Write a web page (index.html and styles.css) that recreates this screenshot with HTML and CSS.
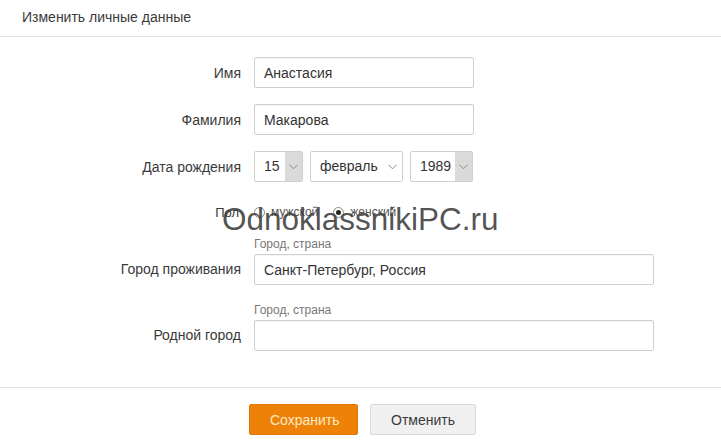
FILE: index.html
```html
<!DOCTYPE html>
<html>
	<head>
		<meta charset="utf-8" />
		<meta name="viewport" content="width=device-width, initial-scale=1.0" />
		<title>Изменить личные данные</title>
		<link rel="stylesheet" href="styles.css">
	</head>
	<body class="main">
        <header class="panel-header">Изменить личные данные</header>
        <form class="form">
            <div class="row">
                <label class="label">Имя</label>
                <input class="field field-short" type="text" value="Анастасия">
            </div>
            <div class="row">
                <label class="label">Фамилия</label>
                <input class="field field-short" type="text" value="Макарова">
            </div>
            <div class="row">
                <label class="label">Дата рождения</label>
                <div class="date">
                    <div class="select select-day">
                        <span class="select-value">15</span>
                        <span class="select-arrow shaded">
                            <svg width="9" height="6" viewBox="0 0 9 6"><path d="M0.5 0.8 L4.5 4.8 L8.5 0.8" fill="none" stroke="#8a8a8a" stroke-width="1"/></svg>
                        </span>
                    </div>
                    <div class="select select-month">
                        <span class="select-value">февраль</span>
                        <span class="select-arrow">
                            <svg width="9" height="6" viewBox="0 0 9 6"><path d="M0.5 0.8 L4.5 4.8 L8.5 0.8" fill="none" stroke="#8a8a8a" stroke-width="1"/></svg>
                        </span>
                    </div>
                    <div class="select select-year">
                        <span class="select-value">1989</span>
                        <span class="select-arrow shaded">
                            <svg width="9" height="6" viewBox="0 0 9 6"><path d="M0.5 0.8 L4.5 4.8 L8.5 0.8" fill="none" stroke="#8a8a8a" stroke-width="1"/></svg>
                        </span>
                    </div>
                </div>
            </div>
            <div class="row row-gender">
                <label class="label label-small">Пол</label>
                <div class="radios">
                    <span class="radio"><span class="radio-dot"></span>мужской</span>
                    <span class="radio"><span class="radio-dot checked"></span>женский</span>
                </div>
            </div>
            <div class="row row-city">
                <label class="label label-city">Город проживания</label>
                <div class="city">
                    <span class="hint">Город, страна</span>
                    <input class="field field-wide" type="text" value="Санкт-Петербург, Россия">
                </div>
            </div>
            <div class="row row-city">
                <label class="label label-city">Родной город</label>
                <div class="city">
                    <span class="hint">Город, страна</span>
                    <input class="field field-wide" type="text" value="">
                </div>
            </div>
        </form>
        <footer class="panel-footer">
            <button type="button" class="btn btn-save">Сохранить</button>
            <button type="button" class="btn btn-cancel">Отменить</button>
        </footer>
        <div class="watermark">OdnoklassnikiPC.ru</div>
	</body>
</html>
```

FILE: styles.css
```css
            :root {
                --font-family: "Liberation Sans", Arial, sans-serif;
                --text: #333;
                --border: #cfcfcf;
            }

			body {
				margin: 0;
				padding: 0;
                overflow: hidden;
                color: var(--text);
                font-family: var(--font-family);
                font-size: 14px;
                width: 721px;
                height: 442px;
				background-color: #fff;
                position: relative;
			}

            .panel-header {
                height: 36px;
                line-height: 34px;
                padding-left: 22px;
                border-bottom: 1px solid #e3e3e3;
                color: #3a3a3a;
            }

            .form {
                padding-top: 20px;
                padding-bottom: 1px;
            }

            .row {
                display: flex;
                align-items: center;
                margin-bottom: 16px;
            }

            .label {
                width: 241px;
                margin-right: 13px;
                text-align: right;
                color: #3a3a3a;
                flex-shrink: 0;
            }

            .label-small {
                font-size: 13px;
                margin-right: 15px;
                width: 239px;
            }

            .field {
                box-sizing: border-box;
                height: 31px;
                margin: 0;
                padding: 0 9px;
                border: 1px solid var(--border);
                border-radius: 2px;
                box-shadow: inset 0 1px 1px rgba(0, 0, 0, 0.04);
                font-family: var(--font-family);
                font-size: 14px;
                color: var(--text);
                background: #fff;
                outline: none;
            }

            .field-short {
                width: 220px;
            }

            .field-wide {
                width: 400px;
            }

            .date {
                display: flex;
                gap: 7px;
            }

            .select {
                box-sizing: border-box;
                display: flex;
                align-items: stretch;
                height: 31px;
                border: 1px solid var(--border);
                border-radius: 2px;
                overflow: hidden;
            }

            .select-value {
                flex: 1;
                line-height: 29px;
                padding-left: 9px;
                color: var(--text);
            }

            .select-arrow {
                width: 17px;
                display: flex;
                align-items: center;
                justify-content: center;
            }

            .select-arrow.shaded {
                background: #dadada;
            }

            .select-day {
                width: 49px;
            }

            .select-month {
                width: 93px;
            }

            .select-month .select-arrow {
                width: 20px;
            }

            .select-year {
                width: 63px;
            }

            .row-gender {
                margin-top: 23px;
                margin-bottom: 18px;
                height: 14px;
            }

            .radios {
                display: flex;
                gap: 15px;
                font-size: 12px;
                color: #555;
            }

            .radio {
                display: flex;
                align-items: center;
                gap: 6px;
                line-height: 14px;
            }

            .radio-dot {
                box-sizing: border-box;
                width: 11px;
                height: 11px;
                border: 1px solid #8c8c8c;
                border-radius: 50%;
                background: #fff;
                position: relative;
            }

            .radio-dot.checked::after {
                content: "";
                position: absolute;
                left: 2px;
                top: 2px;
                width: 5px;
                height: 5px;
                border-radius: 50%;
                background: #222;
            }

            .row-city {
                align-items: flex-end;
                margin-bottom: 18px;
            }

            .row-city:last-child {
                margin-bottom: 0;
            }

            .label-city {
                line-height: 31px;
            }

            .city {
                display: flex;
                flex-direction: column;
                gap: 3px;
            }

            .hint {
                font-size: 12px;
                line-height: 14px;
                color: #777;
            }

            .panel-footer {
                margin-top: 35px;
                border-top: 1px solid #e3e3e3;
                padding-top: 16px;
                display: flex;
                justify-content: center;
                gap: 12px;
                padding-left: 4px;
            }

            .btn {
                box-sizing: border-box;
                height: 31px;
                padding: 0 20px;
                border-radius: 2px;
                font-family: var(--font-family);
                font-size: 14px;
                cursor: pointer;
            }

            .btn-save {
                background-color: #ee8208;
                border: 1px solid #e07a06;
                color: #fde8c4;
                width: 109px;
            }

            .btn-cancel {
                background-color: #f0f0f0;
                border: 1px solid #d9d9d9;
                color: #3a3a3a;
                width: 106px;
            }

            .watermark {
                position: absolute;
                left: 222px;
                top: 203px;
                font-size: 31.5px;
                line-height: 32px;
                color: rgba(60, 60, 60, 0.88);
                pointer-events: none;
                white-space: nowrap;
            }
```
